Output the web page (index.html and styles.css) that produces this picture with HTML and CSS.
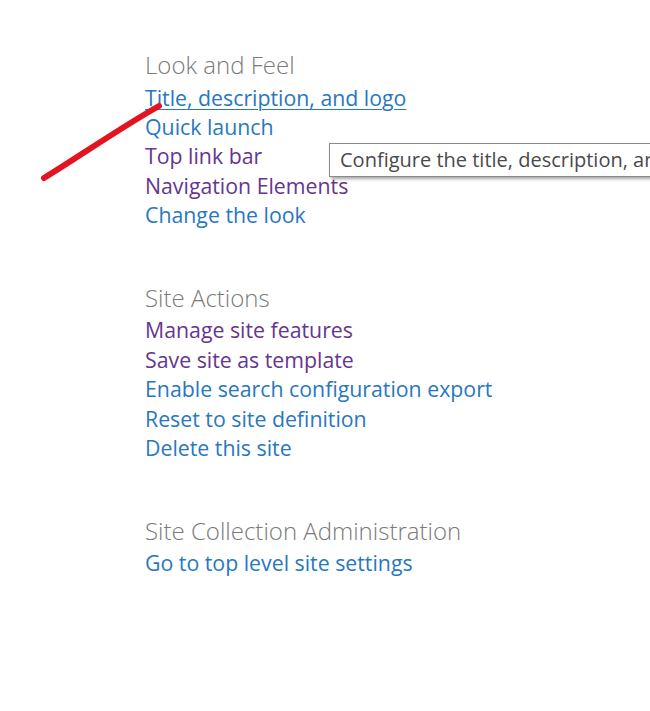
FILE: index.html
```html
<!DOCTYPE html>
<html>
<head>
<meta charset="utf-8">
<link rel="stylesheet" href="styles.css">
</head>
<body>
<div class="page">
  <section class="group">
    <h2 class="group-title">Look and Feel</h2>
    <ul class="links">
      <li><a class="link hover" href="#">Title, description, and logo</a></li>
      <li><a class="link" href="#">Quick launch</a></li>
      <li><a class="link visited" href="#">Top link bar</a></li>
      <li><a class="link visited" href="#">Navigation Elements</a></li>
      <li><a class="link" href="#">Change the look</a></li>
    </ul>
  </section>
  <section class="group">
    <h2 class="group-title">Site Actions</h2>
    <ul class="links">
      <li><a class="link visited" href="#">Manage site features</a></li>
      <li><a class="link visited" href="#">Save site as template</a></li>
      <li><a class="link" href="#">Enable search configuration export</a></li>
      <li><a class="link" href="#">Reset to site definition</a></li>
      <li><a class="link" href="#">Delete this site</a></li>
    </ul>
  </section>
  <section class="group">
    <h2 class="group-title">Site Collection Administration</h2>
    <ul class="links">
      <li><a class="link" href="#">Go to top level site settings</a></li>
    </ul>
  </section>
</div>
<div class="tooltip">Configure the title, description, and logo of this site.</div>
<svg class="arrow" width="650" height="711" viewBox="0 0 650 711">
  <path d="M44 178 C 80 156, 120 128, 159 106" fill="none" stroke="#e3141f" stroke-width="6" stroke-linecap="round"/>
</svg>
</body>
</html>
```

FILE: styles.css
```css
html, body {
  margin: 0;
  padding: 0;
  background: #ffffff;
}
body {
  font-family: "Open Sans", "Noto Sans", "Liberation Sans", sans-serif;
  width: 650px;
  height: 711px;
  overflow: hidden;
  position: relative;
}
.page {
  padding: 46px 0 0 145px;
  display: flex;
  flex-direction: column;
  gap: 49.5px;
}
.group-title {
  margin: 0;
  padding-top: 1px;
  font-weight: 300;
  font-size: 24px;
  line-height: 35.5px;
  color: #7a7a7a;
}
.links {
  list-style: none;
  margin: 0;
  padding: 0;
}
.links li {
  line-height: 29.4px;
  height: 29.4px;
  white-space: nowrap;
}
.link {
  font-size: 21.3px;
  color: #2878c0;
  text-decoration: none;
}
.link.visited {
  color: #65368f;
}
.link.hover {
  text-decoration: underline;
  text-decoration-thickness: 1px;
  text-underline-offset: 3px;
}
.tooltip {
  position: absolute;
  left: 329px;
  top: 143px;
  height: 34px;
  padding: 0 10px;
  box-sizing: border-box;
  white-space: nowrap;
  border: 1px solid #8a8a8a;
  background: #fff;
  box-shadow: 2px 2px 3px rgba(0,0,0,0.35);
  font-size: 20px;
  line-height: 32px;
  color: #4a4a4a;
}
.arrow {
  position: absolute;
  left: 0;
  top: 0;
  pointer-events: none;
}
```
